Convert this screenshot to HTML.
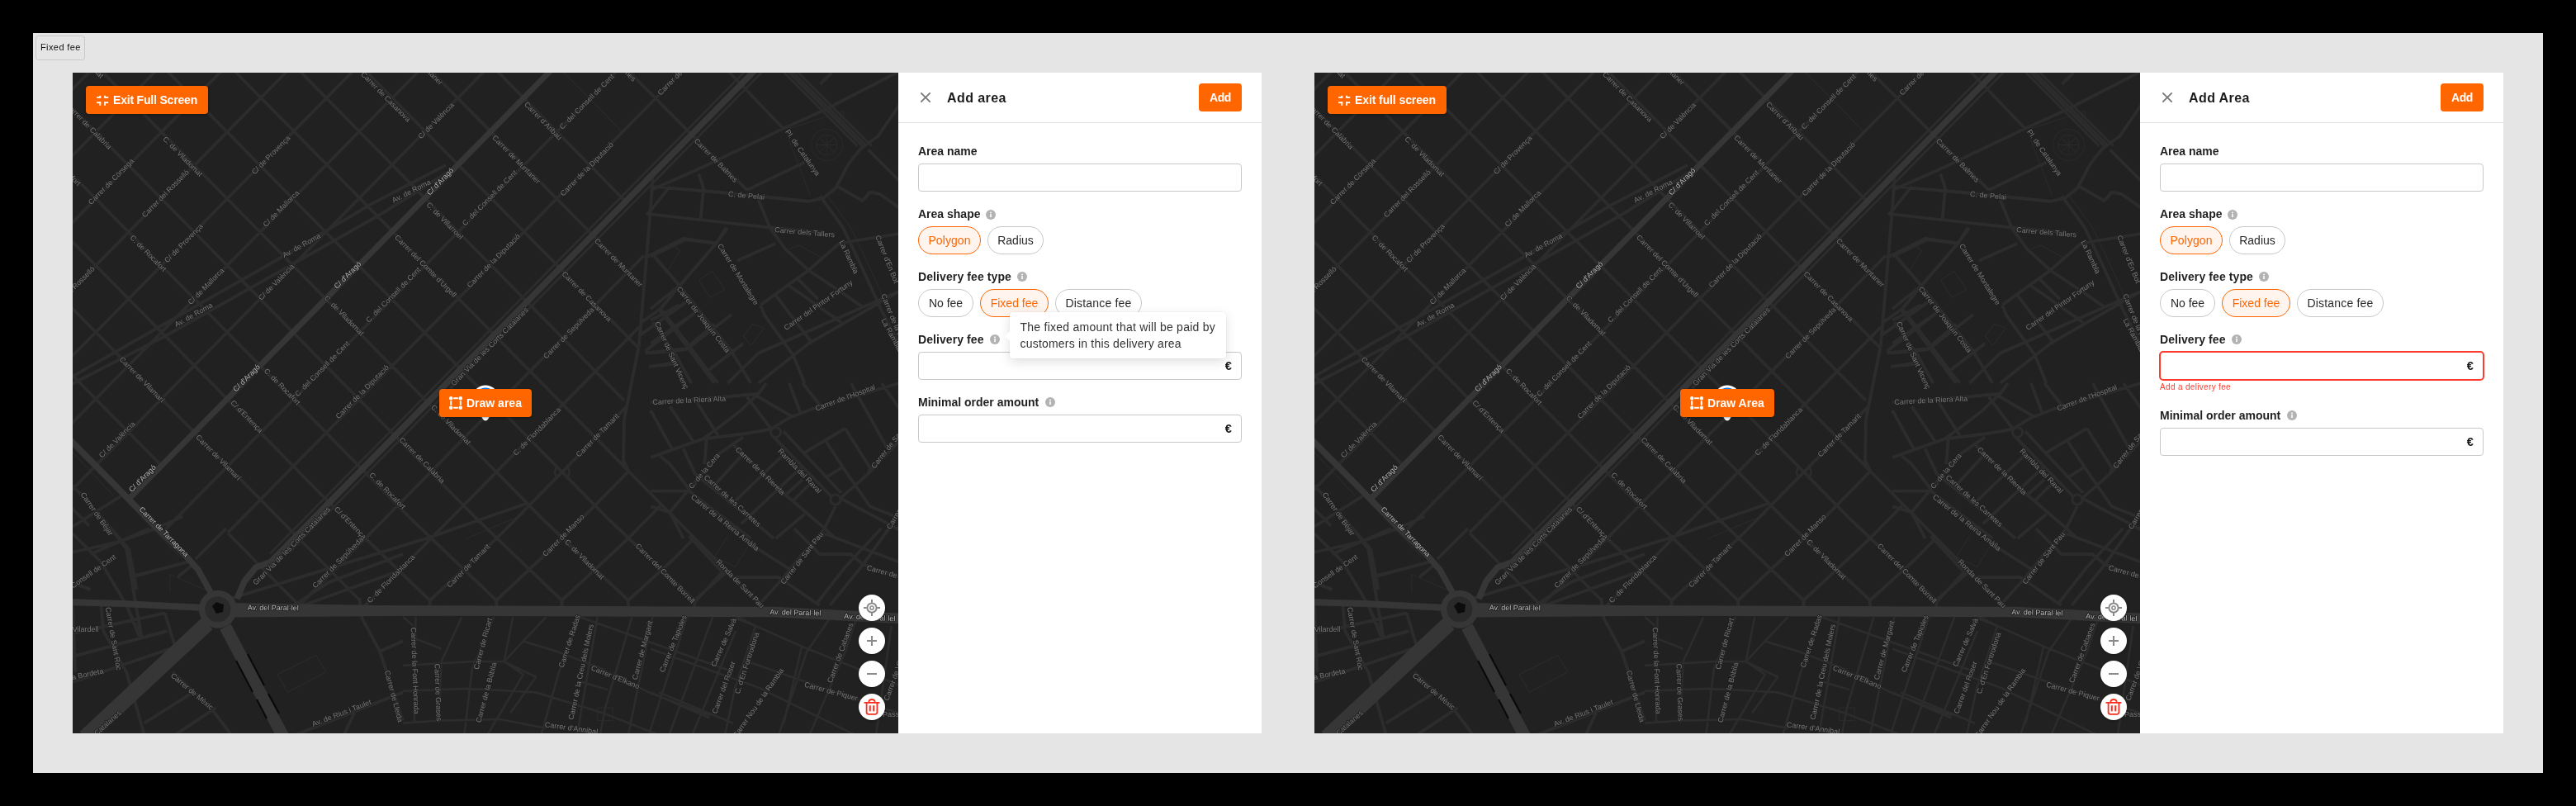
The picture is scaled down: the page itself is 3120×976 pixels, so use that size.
<!DOCTYPE html>
<html><head><meta charset="utf-8"><title>Fixed fee</title>
<style>
*{box-sizing:border-box;margin:0;padding:0}
html,body{width:3120px;height:976px;background:#000;overflow:hidden}
body{position:relative;font-family:"Liberation Sans",sans-serif;color:#1f1f1f}
.canvas{position:absolute;left:40px;top:40px;width:3040px;height:896px;background:#e5e5e5}
.tab{will-change:transform;position:absolute;left:43px;top:43px;width:60px;height:30px;border:1px solid #c9c9c9;border-radius:3.500px;font-size:11px;line-height:27.600px;color:#111;padding-left:5px;white-space:nowrap}
.frame{will-change:transform;position:absolute;top:88px;width:1440px;height:800px;background:#fff;overflow:hidden}
.map{position:absolute;left:0;top:0;width:1000px;height:800px;background:#212121;overflow:hidden}
.map svg.m{position:absolute;left:0;top:0}
.btn{position:absolute;height:34px;border-radius:4px;background:#ff6600;color:#fff;font-weight:bold;font-size:14px;line-height:34px;white-space:nowrap}
.btn span{position:absolute;top:0}
.btn svg{position:absolute}
.exit{left:16px;top:16px;box-shadow:0 1px 3px rgba(0,0,0,.35)}
.draw{top:383px;box-shadow:0 1px 3px rgba(0,0,0,.35)}
.ctl{position:absolute;left:952px;width:32px;height:32px;border-radius:50%;background:#fff;box-shadow:0 1px 3px rgba(0,0,0,.3)}
.ctl svg{position:absolute;left:0;top:0}
.panel{position:absolute;left:1000px;top:0;width:440px;height:800px;background:#fff}
.hdr{position:absolute;left:0;top:0;width:440px;height:61px;border-bottom:1px solid #e0e0e0}
.title{position:absolute;left:59px;top:21px;font-size:16px;line-height:20px;font-weight:bold;color:#1a1a1a;white-space:nowrap}
.add{left:364px;top:13px;width:52px;text-align:center}
.lbl{position:absolute;left:24px;height:20px;font-size:14px;line-height:20px;font-weight:bold;color:#1f1f1f;white-space:nowrap}
.info{position:absolute;width:12px;height:12px}
.inp{position:absolute;left:24px;width:392px;height:34px;border:1px solid #c8c8c8;border-radius:4px;background:#fff}
.inp.err{border:2px solid #ff3b30;left:23px;width:394px;height:36px;border-radius:5px}
.eur{position:absolute;font-size:14.500px;line-height:20px;color:#1a1a1a;font-weight:bold}
.chip{position:absolute;height:34px;border:1px solid #c8c8c8;border-radius:17px;font-size:14px;line-height:32px;text-align:center;color:#2a2a2a;background:#fff;white-space:nowrap}
.chip.on{border-color:#ff6600;background:#fff4ee;color:#ff6600}
.tip{position:absolute;left:135px;top:290px;width:262px;height:56px;background:#fff;border-radius:4px;box-shadow:0 4px 14px rgba(0,0,0,.13),0 0 2px rgba(0,0,0,.08);font-size:14px;line-height:20px;color:#333;padding:8px 0 0 12.5px;white-space:nowrap}
.tip:before{content:"";position:absolute;left:-4px;top:24.500px;width:8px;height:8px;background:#fff;transform:rotate(45deg)}
.errtxt{position:absolute;left:24px;font-size:10px;line-height:12px;color:#ff3b30;white-space:nowrap}
.t-tab{letter-spacing:.4px}
.frame.f1 .t-exit{letter-spacing:-.19px}
.frame.f2 .t-exit{letter-spacing:-.1px}
.t-title{letter-spacing:.41px}
.t-add{letter-spacing:-.45px}
.t-c5{letter-spacing:.17px}
.t-tip1{letter-spacing:.25px}
.t-tip2{letter-spacing:.2px}
.t-err{letter-spacing:.33px}
.t-l4{letter-spacing:.08px}.t-l3{letter-spacing:.1px}.t-c1{letter-spacing:.08px}
</style></head>

<svg width="0" height="0" style="position:absolute"><defs>
<g id="mapg">
<rect width="1000" height="800" fill="#212121"/>
<path d="M590.1 -5.0L665.8 71.9M0.0 453.5L55.8 509.3L130.2 586.9M0.0 459.7L49.6 512.4M477.0 564.0L547.0 534.6M863.3 70.0L893.6 149.3M867.9 67.6L933.3 46.7L935.6 77.0M914.6 149.3L942.6 188.0M942.6 188.0L963.6 232.3L989.2 288.3L1003.2 318.6M758.3 251.0L774.6 240.5L789.8 262.6L772.3 272.0L758.3 251.0M812.0 318.6L823.6 304.6L837.6 309.3L821.3 330.3L812.0 318.6M867.9 213.7L879.6 209.0L909.9 225.3M721.3 239.3L735.3 216.0L728.3 209.0M793.1 561.3L777.6 586.1L802.4 598.5L817.9 573.7M635.7 769.1L654.3 769.1L654.3 784.6L635.7 784.6L635.7 769.1M248.1 728.7L294.6 705.5L307.0 725.6L260.5 750.4L248.1 728.7M117.8 629.5L117.8 607.8L161.2 626.4" fill="none" stroke="#2a2a2a" stroke-width="1.2"/>
<path d="M-5.0 24.6L25.0 -5.9M-5.0 105.4L103.0 -4.3M-5.0 186.2L183.4 -5.1M-5.0 267.0L263.0 -5.1M-5.0 347.8L342.6 -5.1M-5.0 428.6L422.2 -5.1M-5.0 509.4L501.8 -5.1M108.1 557.3L662.0 -5.1M187.7 557.3L742.0 -5.5M275.0 644.7L692.0 221.3M350.0 649.3L686.0 308.2M432.6 639.0L517.6 560.0L672.0 403.2M513.2 639.0L597.2 560.0L673.4 482.6M592.5 639.0L671.9 565.0L713.2 523.0M672.9 639.0L726.9 590.0L753.0 563.5M753.2 639.0L792.8 603.9M432.6 638.0L432.6 648.0M513.2 638.0L513.2 648.0M592.5 638.0L592.5 648.0M672.9 638.0L672.9 648.0M753.2 638.0L753.2 648.0M-5.0 361.6L107.6 475.9M187.7 557.3L272.2 643.0M-5.0 280.8L271.0 561.0M271.0 561.0L348.8 640.0M-207.0 -5.1L329.9 540.0L432.6 639.0M-127.4 -5.1L409.5 540.0L513.2 639.0M-47.8 -5.1L489.1 540.0L592.5 639.0M-5.0 -42.4L568.7 540.0L672.9 639.0M-5.0 -123.2L648.3 540.0L753.2 639.0M193.1 -5.0L843.2 655.0M272.1 -5.0L668.0 397.0M352.1 -5.0L686.0 334.0M431.1 -5.0L693.0 260.9M511.1 -5.0L669.8 156.1M670.1 -5.0L816.6 142.0M793.0 -3.0L861.0 68.0M-5.0 523.2L20.0 548.6M0.0 500.0L34.1 537.2L68.2 577.6L77.5 625.9M0.0 549.6L58.9 512.4M0.0 580.7L55.8 568.2L99.2 552.7L133.3 537.2M74.4 610.1L136.4 593.1M0.0 617.9L21.7 625.9M-3.0 369.5L103.0 309.0L254.0 223.0L360.0 160.0L452.0 112.0M-3.0 378.0L112.0 319.0L268.0 231.0L372.0 172.0L462.0 116.0M190.1 637.3L432.7 562.6L549.3 521.8M703.0 120.0L701.0 150.0L698.0 188.0L686.0 330.0L676.0 380.0L668.0 420.0L667.0 470.0L673.4 482.6M700.0 142.3L758.3 116.6L861.0 67.6L909.9 45.5L986.9 5.8L1003.2 -2.3M700.0 137.6L793.3 145.8L891.3 155.8L909.9 151.6L923.9 140.0L940.3 109.6L954.3 92.1L975.3 77.0L1000.9 39.7M816.6 142.3L886.6 108.5M723.3 137.6L707.0 158.6L695.3 172.6M758.3 122.5L764.1 140.0L760.6 177.3M700.0 171.4L793.3 181.9L849.3 188.0L909.9 193.6M830.6 154.0L844.6 188.0M926.3 137.6L956.6 155.1L965.9 144.6L977.6 147.0L1000.9 163.3M963.6 93.3L1000.9 130.6M905.3 14.0L919.3 0.0M866.8 -2.3L957.8 89.8M905.3 149.3L933.3 188.0M933.3 188.0L954.3 232.3L979.9 288.3L1000.9 328.0M700.0 223.0L742.0 202.0L779.3 206.7L793.3 188.0M779.3 206.7L735.0 258.0L700.0 286.0M704.7 223.0L735.0 258.0L798.0 337.3L821.3 376.0M844.6 188.0L863.3 213.7L891.3 239.3L933.3 267.3L956.6 283.6M805.0 227.7L851.6 206.7M833.0 281.3L891.3 239.3L928.6 206.7L1000.9 195.0M833.0 281.3L837.6 293.0L872.6 342.0L886.6 376.0M793.3 376.0L830.6 339.6L968.3 279.0L1000.9 265.0M830.6 376.0L891.3 328.0L1000.9 265.0M851.6 269.6L895.9 328.0M867.9 258.0L930.9 302.3M877.3 248.6L902.9 274.3M711.7 288.3L746.7 335.0L777.0 376.0M700.0 300.0L735.0 281.3M700.0 328.0L753.7 290.6M746.7 332.6L798.0 293.0M770.0 360.6L812.0 328.0M700.0 339.6L744.3 335.0M700.0 355.9L730.3 351.3M695.6 223.0L740.0 200.8L779.6 206.7L791.3 188.0M705.0 223.0L735.3 258.0L712.0 286.0L688.6 302.3M779.6 206.7L735.3 258.0M712.0 286.0L744.6 328.0L772.6 365.3L781.9 376.0M686.3 318.6L744.6 276.6M693.3 337.3L754.0 290.6M744.6 332.6L777.3 304.6M693.3 339.6L747.0 333.8M698.0 355.9L730.6 352.5M702.6 302.3L730.6 342.0L749.3 376.0M700.0 465.8L763.0 443.6L809.6 437.8L844.6 432.0L867.9 418.0L898.3 406.3L1000.9 376.0M849.3 441.3L919.3 513.6M861.0 434.3L930.9 509.0M700.0 399.3L793.3 392.3L830.6 388.8L840.0 376.0M830.6 388.8L809.6 408.7L779.3 432.0L763.0 443.6M816.6 392.3L844.6 429.7M826.0 390.0L870.3 415.7M723.3 532.3L746.7 504.3L781.6 462.3L812.0 441.3M800.3 450.6L863.3 511.3L909.9 550.9L923.9 564.0M739.7 455.3L753.7 485.6L830.6 548.6L849.3 564.0M700.0 506.6L746.7 506.6L821.3 564.0M923.9 520.6L963.6 485.6L1000.9 446.0M930.9 516.0L1000.9 553.3M923.9 525.3L909.9 553.3L900.6 564.0M779.3 497.3L809.6 464.6M802.6 518.3L858.6 464.6M809.6 546.3L884.3 476.3M863.3 511.3L884.3 492.6M872.6 518.3L893.6 497.3M851.6 564.0L886.6 534.6M886.6 460.0L935.6 430.8M912.3 446.0L933.3 478.6L965.9 525.3L1000.9 539.3M912.3 490.3L930.9 478.6M935.6 430.8L965.9 478.6L963.6 485.6M867.9 376.0L881.9 413.3M942.6 376.0L986.9 455.3M979.9 376.0L1000.9 406.3M884.3 376.0L909.9 408.7M700.0 408.7L725.7 455.3M723.3 404.0L751.3 446.0M756.0 399.3L781.6 439.0M700.0 525.3L723.3 532.3L739.7 564.0M711.7 464.6L723.3 474.0L746.7 504.3M767.6 443.6L765.3 474.0M802.4 611.0L855.1 611.0L904.8 645.1M833.4 642.0L861.3 611.0L886.2 579.9L911.0 558.2M746.5 561.3L786.9 604.7L752.7 642.0M830.3 576.8L873.8 604.7M911.0 558.2L1000.0 592.3M873.8 552.0L904.8 583.0L942.0 583.0L957.5 595.4L1000.0 611.0M901.7 642.0L935.8 598.5L979.2 552.0M917.2 645.1L957.5 595.4L988.6 552.0M0.0 558.2L34.1 592.3L65.1 645.0L83.7 685.3M46.5 552.0L65.1 576.8L83.7 685.3M21.7 583.0L93.0 552.0M74.4 609.4L139.5 592.3M0.0 679.1L111.6 654.3M0.0 707.0L114.7 676.0M0.0 738.0L117.8 697.7M34.1 641.9L37.2 676.0L65.1 725.6L86.8 801.9M111.6 654.3L124.0 694.6M0.0 645.0L3.1 725.6M65.1 645.0L80.6 682.2M186.0 552.0L148.8 589.2M127.1 610.9L145.7 595.4M120.9 725.6L167.4 769.1L192.2 801.9M86.8 787.7L145.7 750.4M124.0 801.9L173.6 769.1M269.8 801.9L400.0 750.4M350.4 660.5L372.1 700.8L400.0 784.6M372.1 700.8L400.0 688.4M328.7 801.9L341.1 775.3M272.9 641.9L310.1 617.1L400.0 583.0M279.1 645.0L400.0 601.6M347.3 635.7L350.4 660.5" fill="none" stroke="#2c2c2c" stroke-width="3.9" stroke-linejoin="round"/>
<path d="M239.2 582.2L824.2 -11.7M260.8 582.2L845.8 -11.7M859.4 -2.3L950.4 88.6M865.1 -2.3L956.1 88.6M870.8 -2.3L961.8 88.6M876.5 -2.3L967.5 88.6" fill="none" stroke="#2c2c2c" stroke-width="3"/>
<path d="M471.3 659.0L446.5 713.2L443.4 787.7M415.5 659.0L414.0 787.7M510.1 659.0L483.7 722.5L474.4 801.9M533.3 659.0L522.5 713.2M573.6 659.0L545.7 688.4L522.5 713.2M614.0 659.0L589.1 725.6L567.4 801.9M635.7 659.0L610.9 801.9M677.5 659.0L645.0 769.1L638.8 801.9M702.3 659.0L672.9 801.9M744.2 659.0L697.7 801.9M775.2 659.0L722.5 801.9M803.1 676.0L750.4 801.9M545.7 688.4L586.0 700.8L635.7 719.4L697.7 750.4L772.1 778.4M400.0 717.9L483.7 713.2L522.5 713.2L561.2 731.8M400.0 748.9L477.5 745.8L561.2 750.4L641.9 775.3L710.1 801.9M400.0 787.7L443.4 784.6L517.8 783.0L573.6 793.9M415.5 685.3L446.5 697.7M522.5 713.2L545.7 728.7L502.3 801.9M561.2 731.8L530.2 775.3M617.1 738.0L648.1 747.3M710.1 750.4L800.0 787.7M400.0 659.0L412.4 669.8M614.0 659.0L800.0 725.6M700.0 697.8L830.3 744.4L948.2 802.1M700.0 750.6L771.4 781.6M827.2 669.9L802.4 744.4L790.0 802.1M802.4 660.6L827.2 669.9L883.1 694.7L960.6 725.8L1000.0 741.3M855.1 802.1L889.3 700.9L917.2 660.6M883.1 694.7L861.3 787.8M892.4 802.1L935.8 700.9L948.2 663.7M805.5 659.0L827.2 669.9M817.9 713.3L880.0 735.1L1000.0 775.4M991.7 669.9L973.0 802.1" fill="none" stroke="#2c2c2c" stroke-width="2.7" stroke-linejoin="round"/>
<path d="M67.8 516.3L582.0 -5.7" fill="none" stroke="#363636" stroke-width="7" stroke-linejoin="round"/>
<path d="M199.0 637.0L208.0 616.0L222.0 599.0L240.0 592.4L830.0 -6.6" fill="none" stroke="#363636" stroke-width="7.6" stroke-linejoin="round"/>
<path d="M167.0 629.0L152.0 602.0L136.0 584.0L102.0 551.1L-5.0 442.4" fill="none" stroke="#363636" stroke-width="7.5" stroke-linejoin="round"/>
<path d="M190 650.5L850 653L1005 661" fill="none" stroke="#363636" stroke-width="12.5" stroke-linejoin="round"/>
<path d="M160 648L60 643L-5 641" fill="none" stroke="#363636" stroke-width="8" stroke-linejoin="round"/>
<path d="M163 667L15 805" fill="none" stroke="#363636" stroke-width="19" stroke-linejoin="round"/>
<path d="M185 671L256 806" fill="none" stroke="#363636" stroke-width="15" stroke-linejoin="round"/>
<path d="M190 642L450 646.500L450 657.500L190 659.500z" fill="#363636"/>
<circle cx="175.800" cy="649.700" r="23" fill="#363636"/><circle cx="175.800" cy="649.700" r="15.5" fill="#2a2a2a"/><path d="M169 646l5-5 9 3-1 9-8 2z" fill="#0c0c0c"/>
<path d="M198 712L218 750M223 759L235 782M212 704L232 742M237 752L250 776" stroke="#0a0a0a" stroke-width="2.2" fill="none"/>
<g fill="none" stroke="#2a2a2a" stroke-width="1"><circle cx="913.4" cy="87.5" r="12.500"/><circle cx="913.4" cy="87.5" r="19"/><path d="M901 87.500h25M913.400 75v25M904.500 78.500l18 18M904.500 96.500l18-18"/></g>
<g fill="#212121" stroke="#2c2c2c" stroke-width="3"><circle cx="851.6" cy="435.5" r="6"/><circle cx="923.9" cy="517.1" r="6"/></g>
<path d="M586.8 474.7l-3 9 3 9M598.8 474.7l3 9-3 9" stroke="#2c2c2c" stroke-width="2.5" fill="none"/>
<g font-family="Liberation Sans, sans-serif" font-size="9" fill="#767676" stroke="#212121" stroke-width="2" paint-order="stroke" stroke-linejoin="round">
<text transform="translate(45.7 91.0) rotate(45.4)" text-anchor="end" dy="3.2">Carrer de Calàbria</text>
<text transform="translate(46.4 131.6) rotate(-45.4)" text-anchor="middle" dy="3.2">Carrer de Còrsega</text>
<text transform="translate(133.5 101.4) rotate(45.4)" text-anchor="middle" dy="3.2">C. de Viladomat</text>
<text transform="translate(112.2 146.3) rotate(-45.4)" text-anchor="middle" dy="3.2">Carrer del Rosselló</text>
<text transform="translate(240.0 99.5) rotate(-45.4)" text-anchor="middle" dy="3.2">C/ de Provença</text>
<text transform="translate(252.3 164.5) rotate(-45.4)" text-anchor="middle" dy="3.2">C/ de Mallorca</text>
<text transform="translate(134.3 206.3) rotate(-45.4)" text-anchor="middle" dy="3.2">C/ de Provença</text>
<text transform="translate(91.7 218.7) rotate(45.4)" text-anchor="middle" dy="3.2">C. de Rocafort</text>
<text transform="translate(277.0 209.0) rotate(-29.0)" text-anchor="middle" dy="3.2">Av. de Roma</text>
<text transform="translate(161.4 258.5) rotate(-45.4)" text-anchor="middle" dy="3.2">C/ de Mallorca</text>
<text transform="translate(246.5 253.5) rotate(-45.4)" text-anchor="middle" dy="3.2">C/ de València</text>
<text transform="translate(146.3 293.0) rotate(-29.0)" text-anchor="middle" dy="3.2">Av. de Roma</text>
<text transform="translate(332.8 245.0) rotate(-45.4)" text-anchor="middle" dy="3.2" fill="#b9b9b9">C/ d&#39;Aragó</text>
<text transform="translate(445.0 131.6) rotate(-45.4)" text-anchor="middle" dy="3.2" fill="#b9b9b9">C/ d&#39;Aragó</text>
<text transform="translate(410.2 143.2) rotate(-27.0)" text-anchor="middle" dy="3.2">Av. de Roma</text>
<text transform="translate(379.3 29.0) rotate(45.4)" text-anchor="middle" dy="3.2">Carrer de Casanova</text>
<text transform="translate(440.0 58.0) rotate(-45.4)" text-anchor="middle" dy="3.2">C/ de València</text>
<text transform="translate(450.9 179.2) rotate(45.4)" text-anchor="middle" dy="3.2">C. de Villarroel</text>
<text transform="translate(427.6 234.1) rotate(45.4)" text-anchor="middle" dy="3.2">Carrer del Comte d&#39;Urgell</text>
<text transform="translate(388.2 269.0) rotate(-45.4)" text-anchor="middle" dy="3.2">C. del Consell de Cent</text>
<text transform="translate(329.0 294.0) rotate(45.4)" text-anchor="middle" dy="3.2">C. de Viladomat</text>
<text transform="translate(25.0 236.0) rotate(-45.4)" text-anchor="end" dy="3.2">Carrer del Rosselló</text>
<text transform="translate(8.5 135.4) rotate(45.4)" text-anchor="end" dy="3.2">C. de Rocafort</text>
<text transform="translate(36.0 5.0) rotate(45.4)" text-anchor="end" dy="3.2">C. de Viladomat</text>
<text transform="translate(447.0 13.5) rotate(45.4)" text-anchor="end" dy="3.2">Carrer de Muntaner</text>
<text transform="translate(504.8 151.6) rotate(-45.4)" text-anchor="middle" dy="3.2">C. del Consell de Cent</text>
<text transform="translate(622.6 35.0) rotate(-45.4)" text-anchor="middle" dy="3.2">C. del Consell de Cent</text>
<text transform="translate(537.5 105.0) rotate(45.4)" text-anchor="middle" dy="3.2">Carrer de Muntaner</text>
<text transform="translate(570.0 58.3) rotate(45.4)" text-anchor="middle" dy="3.2">Carrer d&#39;Aribau</text>
<text transform="translate(622.6 116.6) rotate(-45.4)" text-anchor="middle" dy="3.2">Carrer de la Diputació</text>
<text transform="translate(710.0 25.7) rotate(-45.4)" text-anchor="start" dy="3.2">Carrer de la Diputació</text>
<text transform="translate(681.0 9.0) rotate(45.4)" text-anchor="end" dy="3.2">Carrer de Balmes</text>
<text transform="translate(779.3 106.1) rotate(45.4)" text-anchor="middle" dy="3.2">Carrer de Balmes</text>
<text transform="translate(884.3 96.8) rotate(55.0)" text-anchor="middle" dy="3.2">Pl. de Catalunya</text>
<text transform="translate(816.0 148.6) rotate(5.0)" text-anchor="middle" dy="3.2">C. de Pelai</text>
<text transform="translate(886.6 193.1) rotate(5.0)" text-anchor="middle" dy="3.2">Carrer dels Tallers</text>
<text transform="translate(940.3 223.0) rotate(65.0)" text-anchor="middle" dy="3.2">La Rambla</text>
<text transform="translate(806.1 244.0) rotate(58.0)" text-anchor="middle" dy="3.2">Carrer de Montalegre</text>
<text transform="translate(764.1 298.8) rotate(52.0)" text-anchor="middle" dy="3.2">Carrer de Joaquín Costa</text>
<text transform="translate(903.0 281.3) rotate(-35.0)" text-anchor="middle" dy="3.2">Carrer del Pintor Fortuny</text>
<text transform="translate(975.0 197.0) rotate(68.0)" text-anchor="start" dy="3.2">Carrer d&#39;En Bot</text>
<text transform="translate(982.0 268.0) rotate(68.0)" text-anchor="start" dy="3.2">Carrer de la Portaferrissa</text>
<text transform="translate(982.0 298.0) rotate(62.0)" text-anchor="start" dy="3.2">La Rambla</text>
<text transform="translate(725.7 342.0) rotate(66.0)" text-anchor="middle" dy="3.2">Carrer de Sant Vicenç</text>
<text transform="translate(746.7 396.5) rotate(-3.0)" text-anchor="middle" dy="3.2">Carrer de la Riera Alta</text>
<text transform="translate(935.6 393.5) rotate(-20.0)" text-anchor="middle" dy="3.2">Carrer de l&#39;Hospital</text>
<text transform="translate(764.8 482.1) rotate(-50.0)" text-anchor="middle" dy="3.2">C. de la Cera</text>
<text transform="translate(833.0 482.1) rotate(44.0)" text-anchor="middle" dy="3.2">Carrer de la Riereta</text>
<text transform="translate(880.8 482.1) rotate(46.0)" text-anchor="middle" dy="3.2">Rambla del Raval</text>
<text transform="translate(799.1 518.3) rotate(42.0)" text-anchor="middle" dy="3.2">Carrer de les Carretes</text>
<text transform="translate(790.4 544.8) rotate(39.0)" text-anchor="middle" dy="3.2">Carrer de la Reina Amàlia</text>
<text transform="translate(969.0 478.0) rotate(-52.0)" text-anchor="start" dy="3.2">Carrer de Sant Pau</text>
<text transform="translate(988.0 552.0) rotate(-60.0)" text-anchor="start" dy="3.2">Carrer de Sant Pau</text>
<text transform="translate(458.3 426.2) rotate(45.4)" text-anchor="middle" dy="3.2">C. de Viladomat</text>
<text transform="translate(562.1 434.3) rotate(-45.4)" text-anchor="middle" dy="3.2">C. de Floridablanca</text>
<text transform="translate(635.6 439.0) rotate(-45.4)" text-anchor="middle" dy="3.2">Carrer de Tamarit</text>
<text transform="translate(423.3 469.3) rotate(45.4)" text-anchor="middle" dy="3.2">Carrer de Calàbria</text>
<text transform="translate(594.3 560.3) rotate(-45.4)" text-anchor="middle" dy="3.2">Carrer de Manso</text>
<text transform="translate(505.0 331.5) rotate(-45.4)" text-anchor="middle" dy="3.2">Gran Via de les Corts Catalanes</text>
<text transform="translate(509.6 227.7) rotate(-45.4)" text-anchor="middle" dy="3.2">Carrer de la Diputació</text>
<text transform="translate(622.8 270.8) rotate(45.4)" text-anchor="middle" dy="3.2">Carrer de Casanova</text>
<text transform="translate(661.3 230.0) rotate(45.4)" text-anchor="middle" dy="3.2">Carrer de Muntaner</text>
<text transform="translate(600.6 315.1) rotate(-45.4)" text-anchor="middle" dy="3.2">Carrer de Sepúlveda</text>
<text transform="translate(110.0 397.7) rotate(45.4)" text-anchor="end" dy="3.2">Carrer de Vilamarí</text>
<text transform="translate(210.4 369.7) rotate(-45.4)" text-anchor="middle" dy="3.2" fill="#b9b9b9">C/ d&#39;Aragó</text>
<text transform="translate(53.6 444.2) rotate(-45.4)" text-anchor="middle" dy="3.2">C/ de València</text>
<text transform="translate(210.9 416.3) rotate(45.4)" text-anchor="middle" dy="3.2">C/ d&#39;Entença</text>
<text transform="translate(274.4 400.8) rotate(45.4)" text-anchor="end" dy="3.2">C. de Rocafort</text>
<text transform="translate(302.0 358.5) rotate(-45.4)" text-anchor="middle" dy="3.2">C. del Consell de Cent</text>
<text transform="translate(350.6 386.4) rotate(-45.4)" text-anchor="middle" dy="3.2">Carrer de la Diputació</text>
<text transform="translate(176.7 465.9) rotate(45.4)" text-anchor="middle" dy="3.2">Carrer de Vilamarí</text>
<text transform="translate(84.3 491.3) rotate(-45.4)" text-anchor="middle" dy="3.2" fill="#b9b9b9">C/ d&#39;Aragó</text>
<text transform="translate(29.5 534.1) rotate(55.0)" text-anchor="middle" dy="3.2">Carrer de Béjar</text>
<text transform="translate(110.7 555.8) rotate(45.4)" text-anchor="middle" dy="3.2" fill="#b9b9b9">Carrer de Tarragona</text>
<text transform="translate(51.2 585.3) rotate(-35.0)" text-anchor="end" dy="3.2">C. del Consell de Cent</text>
<text transform="translate(381.4 506.2) rotate(45.4)" text-anchor="middle" dy="3.2">C. de Rocafort</text>
<text transform="translate(336.4 545.0) rotate(45.4)" text-anchor="middle" dy="3.2">C/ d&#39;Entença</text>
<text transform="translate(265.1 572.9) rotate(-45.4)" text-anchor="middle" dy="3.2">Gran Via de les Corts Catalanes</text>
<text transform="translate(321.0 593.0) rotate(-45.4)" text-anchor="middle" dy="3.2">Carrer de Sepúlveda</text>
<text transform="translate(358.0 640.4) rotate(-45.4)" text-anchor="start" dy="3.2">C. de Floridablanca</text>
<text transform="translate(242.8 647.8) rotate(0.5)" text-anchor="middle" dy="3.2" fill="#b9b9b9">Av. del Paral·lel</text>
<text transform="translate(31.6 674.0) rotate(0.0)" text-anchor="end" dy="3.2">Carrer de Vilardell</text>
<text transform="translate(49.6 685.3) rotate(80.0)" text-anchor="middle" dy="3.2">Carrer de Sant Roc</text>
<text transform="translate(37.2 724.0) rotate(-12.0)" text-anchor="end" dy="3.2">Carrer de la Bordeta</text>
<text transform="translate(144.8 749.0) rotate(40.0)" text-anchor="middle" dy="3.2">Carrer de Mèxic</text>
<text transform="translate(57.4 773.7) rotate(-42.0)" text-anchor="end" dy="3.2">Gran Via de les Corts Catalanes</text>
<text transform="translate(325.6 775.3) rotate(-21.0)" text-anchor="middle" dy="3.2">Av. de Rius i Taulet</text>
<text transform="translate(389.1 755.1) rotate(75.0)" text-anchor="middle" dy="3.2">Carrer de Lleida</text>
<text transform="translate(479.1 597.0) rotate(-45.4)" text-anchor="middle" dy="3.2">Carrer de Tamarit</text>
<text transform="translate(620.2 589.2) rotate(45.4)" text-anchor="middle" dy="3.2">C. de Viladomat</text>
<text transform="translate(717.8 606.3) rotate(45.4)" text-anchor="middle" dy="3.2">Carrer del Comte Borrell</text>
<text transform="translate(808.6 618.7) rotate(45.4)" text-anchor="middle" dy="3.2">Ronda de Sant Pau</text>
<text transform="translate(414.9 724.1) rotate(88.0)" text-anchor="middle" dy="3.2">Carrer de la Font Honrada</text>
<text transform="translate(442.8 750.4) rotate(88.0)" text-anchor="middle" dy="3.2">Carrer de Grases</text>
<text transform="translate(496.7 691.5) rotate(-75.0)" text-anchor="middle" dy="3.2">Carrer de Ricart</text>
<text transform="translate(500.8 750.4) rotate(-75.0)" text-anchor="middle" dy="3.2">Carrer de la Bòbila</text>
<text transform="translate(601.6 688.4) rotate(-72.0)" text-anchor="middle" dy="3.2">Carrer de Radas</text>
<text transform="translate(615.5 725.6) rotate(-78.0)" text-anchor="middle" dy="3.2">Carrer de la Creu dels Molers</text>
<text transform="translate(657.4 731.8) rotate(22.0)" text-anchor="middle" dy="3.2">Carrer d&#39;Elkano</text>
<text transform="translate(690.0 699.3) rotate(-75.0)" text-anchor="middle" dy="3.2">Carrer de Margarit</text>
<text transform="translate(727.1 691.5) rotate(-68.0)" text-anchor="middle" dy="3.2">Carrer de Tapioles</text>
<text transform="translate(788.4 690.0) rotate(-66.0)" text-anchor="middle" dy="3.2">Carrer de Salvà</text>
<text transform="translate(788.4 744.4) rotate(-70.0)" text-anchor="middle" dy="3.2">Carrer del Roser</text>
<text transform="translate(572.0 789.0) rotate(8.0)" text-anchor="start" dy="3.2">Carrer d&#39;Annibal</text>
<text transform="translate(883.1 587.7) rotate(-52.0)" text-anchor="middle" dy="3.2">Carrer de Sant Pau</text>
<text transform="translate(875.3 653.5) rotate(1.5)" text-anchor="middle" dy="3.2" fill="#b9b9b9">Av. del Paral·lel</text>
<text transform="translate(965.3 659.5) rotate(3.0)" text-anchor="middle" dy="3.2" fill="#b9b9b9">Av. del Paral·lel</text>
<text transform="translate(962.0 599.0) rotate(15.0)" text-anchor="start" dy="3.2">Carrer de les Flors</text>
<text transform="translate(816.4 714.9) rotate(-72.0)" text-anchor="middle" dy="3.2">C. d&#39;En Fontrodona</text>
<text transform="translate(830.3 763.0) rotate(-55.0)" text-anchor="middle" dy="3.2">Carrer Nou de la Rambla</text>
<text transform="translate(929.6 702.5) rotate(-70.0)" text-anchor="middle" dy="3.2">Carrer de Cabanes</text>
<text transform="translate(918.7 749.0) rotate(15.0)" text-anchor="middle" dy="3.2">Carrer de Piquer</text>
<text transform="translate(981.0 777.0) rotate(0.0)" text-anchor="start" dy="3.2">Passatge</text>
<text transform="translate(985.0 760.0) rotate(-70.0)" text-anchor="start" dy="3.2">Carrer de Vila i Vilà</text>
</g>
</g>
</defs></svg>
<body>
<div class="canvas"></div>
<div class="tab"><span class="t-tab">Fixed fee</span></div>
<div class="frame f1" style="left:88px">
<div class="map"><svg class="m" width="1000" height="800" viewBox="0 0 1000 800"><use href="#mapg"/></svg>
<svg style="position:absolute;left:480px;top:374px" width="40" height="50" viewBox="0 0 40 50"><path d="M6.450 29A16 16 0 1 1 33.550 29L22.960 45.860A3.500 3.500 0 0 1 17.040 45.860Z" fill="#fff"/><circle cx="20" cy="20.500" r="13" fill="#1a7df0"/></svg>
<div class="btn exit" style="width:148px"><svg style="left:13px;top:11px" width="16" height="14" viewBox="0 0 16 14"><g fill="#fff"><rect x="0" y="2" width="5.2" height="1.8"/><rect x="3.4" y="0.8" width="1.8" height="3"/><rect x="9.2" y="2" width="5" height="1.8"/><rect x="9.2" y="0.8" width="1.8" height="3"/><rect x="0" y="8.3" width="5.2" height="1.8"/><rect x="3.4" y="8.3" width="1.8" height="4.5"/><rect x="9.2" y="8.3" width="5" height="1.8"/><rect x="9.2" y="8.3" width="1.8" height="4.5"/></g></svg><span style="left:33px" class="t-exit">Exit Full Screen</span></div>
<div class="btn draw" style="left:444px;width:112px"><svg style="left:12px;top:9px" width="16" height="16" viewBox="0 0 16 16"><path d="M5.200 2.200h5.600M5.200 13.800h5.600M2.200 5.200v5.600M13.800 5.200v5.600" fill="none" stroke="#fff" stroke-width="2"/><g fill="#fff"><circle cx="2.200" cy="2.200" r="2.200"/><circle cx="13.800" cy="2.200" r="2.200"/><circle cx="2.200" cy="13.800" r="2.200"/><circle cx="13.800" cy="13.800" r="2.200"/></g></svg><span style="left:33px" class="t-draw">Draw area</span></div>
<div class="ctl" style="top:632px"><svg width="32" height="32" viewBox="0 0 32 32"><g fill="none" stroke="#8a8a8a"><circle cx="16" cy="16" r="5.6" stroke-width="2"/><circle cx="16" cy="16" r="2.1" stroke-width="1.5"/><path d="M16 6v4.5M16 21.500v4.5M6 16h4.5M21.500 16h4.500" stroke-width="2"/></g></svg></div>
<div class="ctl" style="top:672px"><svg width="32" height="32" viewBox="0 0 32 32"><path d="M10 16h12M16 10v12" stroke="#8a8a8a" stroke-width="2" fill="none"/></svg></div>
<div class="ctl" style="top:712px"><svg width="32" height="32" viewBox="0 0 32 32"><path d="M10 16h12" stroke="#8a8a8a" stroke-width="2" fill="none"/></svg></div>
<div class="ctl" style="top:752px"><svg width="32" height="32" viewBox="0 0 32 32"><g fill="none" stroke="#ff2d1f" stroke-width="1.8" stroke-linecap="round" stroke-linejoin="round"><path d="M7.200 10.800h17.600"/><path d="M12.300 10.600c0-2.600 1.200-3.600 3.700-3.600s3.700 1 3.700 3.600"/><path d="M9.600 11.200v11.300a2.300 2.300 0 0 0 2.300 2.300h8.200a2.300 2.300 0 0 0 2.300-2.300V11.200"/></g><g fill="#ff2d1f"><rect x="12.800" y="14.300" width="2" height="7"/><rect x="17.200" y="14.300" width="2" height="7"/></g></svg></div>
</div>
<div class="panel">
<div class="hdr"></div>
<svg style="position:absolute;left:26px;top:23px" width="14" height="14" viewBox="0 0 14 14"><path d="M1.300 1.300l11.400 11.400M12.700 1.300L1.300 12.700" stroke="#787878" stroke-width="1.8" fill="none"/></svg>
<div class="title t-title">Add area</div>
<div class="btn add"><span class="t-add" style="left:13px">Add</span></div>
<div class="lbl t-l1" style="top:85px">Area name</div>
<div class="inp" style="top:110px"></div>
<div class="lbl t-l2" style="top:161px">Area shape</div><svg class="info" style="left:106px;top:165.5px" viewBox="0 0 12 12"><circle cx="6" cy="6" r="6" fill="#b3b3b3"/><rect x="5.2" y="5.1" width="1.6" height="4" fill="#fff"/><circle cx="6" cy="3.4" r="0.95" fill="#fff"/></svg>
<div class="chip on" style="left:24px;top:186px;width:76px"><span class="t-c1">Polygon</span></div>
<div class="chip" style="left:108px;top:186px;width:68px"><span class="t-c2">Radius</span></div>
<div class="lbl t-l3" style="top:237px">Delivery fee type</div><svg class="info" style="left:144px;top:241.2px" viewBox="0 0 12 12"><circle cx="6" cy="6" r="6" fill="#b3b3b3"/><rect x="5.2" y="5.1" width="1.6" height="4" fill="#fff"/><circle cx="6" cy="3.4" r="0.95" fill="#fff"/></svg>
<div class="chip" style="left:24px;top:262px;width:67px"><span class="t-c3">No fee</span></div>
<div class="chip on" style="left:99px;top:262px;width:83px"><span class="t-c4">Fixed fee</span></div>
<div class="chip" style="left:190px;top:262px;width:105px"><span class="t-c5">Distance fee</span></div>
<div class="lbl t-l4" style="top:313px">Delivery fee</div><svg class="info" style="left:111.2px;top:317.3px" viewBox="0 0 12 12"><circle cx="6" cy="6" r="6" fill="#b3b3b3"/><rect x="5.2" y="5.1" width="1.6" height="4" fill="#fff"/><circle cx="6" cy="3.4" r="0.95" fill="#fff"/></svg>
<div class="inp" style="top:338px"></div>
<div class="eur" style="left:395.700px;top:344.600px">€</div>
<div class="lbl t-l5" style="top:389px">Minimal order amount</div><svg class="info" style="left:178px;top:393.3px" viewBox="0 0 12 12"><circle cx="6" cy="6" r="6" fill="#b3b3b3"/><rect x="5.2" y="5.1" width="1.6" height="4" fill="#fff"/><circle cx="6" cy="3.4" r="0.95" fill="#fff"/></svg>
<div class="inp" style="top:414px"></div>
<div class="eur" style="left:395.700px;top:420.6px">€</div>
<div class="tip"><span class="t-tip1">The fixed amount that will be paid by</span><br><span class="t-tip2">customers in this delivery area</span></div>
</div></div>
<div class="frame f2" style="left:1592px">
<div class="map"><svg class="m" width="1000" height="800" viewBox="0 0 1000 800"><use href="#mapg"/></svg>
<svg style="position:absolute;left:480px;top:374px" width="40" height="50" viewBox="0 0 40 50"><path d="M6.450 29A16 16 0 1 1 33.550 29L22.960 45.860A3.500 3.500 0 0 1 17.040 45.860Z" fill="#fff"/><circle cx="20" cy="20.500" r="13" fill="#1a7df0"/></svg>
<div class="btn exit" style="width:144px"><svg style="left:13px;top:11px" width="16" height="14" viewBox="0 0 16 14"><g fill="#fff"><rect x="0" y="2" width="5.2" height="1.8"/><rect x="3.4" y="0.8" width="1.8" height="3"/><rect x="9.2" y="2" width="5" height="1.8"/><rect x="9.2" y="0.8" width="1.8" height="3"/><rect x="0" y="8.3" width="5.2" height="1.8"/><rect x="3.4" y="8.3" width="1.8" height="4.5"/><rect x="9.2" y="8.3" width="5" height="1.8"/><rect x="9.2" y="8.3" width="1.8" height="4.5"/></g></svg><span style="left:33px" class="t-exit">Exit full screen</span></div>
<div class="btn draw" style="left:443px;width:114px"><svg style="left:12px;top:9px" width="16" height="16" viewBox="0 0 16 16"><path d="M5.200 2.200h5.600M5.200 13.800h5.600M2.200 5.200v5.600M13.800 5.200v5.600" fill="none" stroke="#fff" stroke-width="2"/><g fill="#fff"><circle cx="2.200" cy="2.200" r="2.200"/><circle cx="13.800" cy="2.200" r="2.200"/><circle cx="2.200" cy="13.800" r="2.200"/><circle cx="13.800" cy="13.800" r="2.200"/></g></svg><span style="left:33px" class="t-draw">Draw Area</span></div>
<div class="ctl" style="top:632px"><svg width="32" height="32" viewBox="0 0 32 32"><g fill="none" stroke="#8a8a8a"><circle cx="16" cy="16" r="5.6" stroke-width="2"/><circle cx="16" cy="16" r="2.1" stroke-width="1.5"/><path d="M16 6v4.5M16 21.500v4.5M6 16h4.5M21.500 16h4.500" stroke-width="2"/></g></svg></div>
<div class="ctl" style="top:672px"><svg width="32" height="32" viewBox="0 0 32 32"><path d="M10 16h12M16 10v12" stroke="#8a8a8a" stroke-width="2" fill="none"/></svg></div>
<div class="ctl" style="top:712px"><svg width="32" height="32" viewBox="0 0 32 32"><path d="M10 16h12" stroke="#8a8a8a" stroke-width="2" fill="none"/></svg></div>
<div class="ctl" style="top:752px"><svg width="32" height="32" viewBox="0 0 32 32"><g fill="none" stroke="#ff2d1f" stroke-width="1.8" stroke-linecap="round" stroke-linejoin="round"><path d="M7.200 10.800h17.600"/><path d="M12.300 10.600c0-2.600 1.200-3.600 3.700-3.600s3.700 1 3.700 3.600"/><path d="M9.600 11.200v11.300a2.300 2.300 0 0 0 2.300 2.300h8.200a2.300 2.300 0 0 0 2.300-2.300V11.200"/></g><g fill="#ff2d1f"><rect x="12.800" y="14.300" width="2" height="7"/><rect x="17.200" y="14.300" width="2" height="7"/></g></svg></div>
</div>
<div class="panel">
<div class="hdr"></div>
<svg style="position:absolute;left:26px;top:23px" width="14" height="14" viewBox="0 0 14 14"><path d="M1.300 1.300l11.400 11.400M12.700 1.300L1.300 12.700" stroke="#787878" stroke-width="1.8" fill="none"/></svg>
<div class="title t-title">Add Area</div>
<div class="btn add"><span class="t-add" style="left:13px">Add</span></div>
<div class="lbl t-l1" style="top:85px">Area name</div>
<div class="inp" style="top:110px"></div>
<div class="lbl t-l2" style="top:161px">Area shape</div><svg class="info" style="left:106px;top:165.5px" viewBox="0 0 12 12"><circle cx="6" cy="6" r="6" fill="#b3b3b3"/><rect x="5.2" y="5.1" width="1.6" height="4" fill="#fff"/><circle cx="6" cy="3.4" r="0.95" fill="#fff"/></svg>
<div class="chip on" style="left:24px;top:186px;width:76px"><span class="t-c1">Polygon</span></div>
<div class="chip" style="left:108px;top:186px;width:68px"><span class="t-c2">Radius</span></div>
<div class="lbl t-l3" style="top:237px">Delivery fee type</div><svg class="info" style="left:144px;top:241.2px" viewBox="0 0 12 12"><circle cx="6" cy="6" r="6" fill="#b3b3b3"/><rect x="5.2" y="5.1" width="1.6" height="4" fill="#fff"/><circle cx="6" cy="3.4" r="0.95" fill="#fff"/></svg>
<div class="chip" style="left:24px;top:262px;width:67px"><span class="t-c3">No fee</span></div>
<div class="chip on" style="left:99px;top:262px;width:83px"><span class="t-c4">Fixed fee</span></div>
<div class="chip" style="left:190px;top:262px;width:105px"><span class="t-c5">Distance fee</span></div>
<div class="lbl t-l4" style="top:313px">Delivery fee</div><svg class="info" style="left:111.2px;top:317.3px" viewBox="0 0 12 12"><circle cx="6" cy="6" r="6" fill="#b3b3b3"/><rect x="5.2" y="5.1" width="1.6" height="4" fill="#fff"/><circle cx="6" cy="3.4" r="0.95" fill="#fff"/></svg>
<div class="inp err" style="top:337px"></div>
<div class="errtxt t-err" style="top:375.400px">Add a delivery fee</div>
<div class="eur" style="left:395.700px;top:344.600px">€</div>
<div class="lbl t-l5" style="top:405px">Minimal order amount</div><svg class="info" style="left:178px;top:409.3px" viewBox="0 0 12 12"><circle cx="6" cy="6" r="6" fill="#b3b3b3"/><rect x="5.2" y="5.1" width="1.6" height="4" fill="#fff"/><circle cx="6" cy="3.4" r="0.95" fill="#fff"/></svg>
<div class="inp" style="top:430px"></div>
<div class="eur" style="left:395.700px;top:436.6px">€</div>
</div></div>
</body></html>
